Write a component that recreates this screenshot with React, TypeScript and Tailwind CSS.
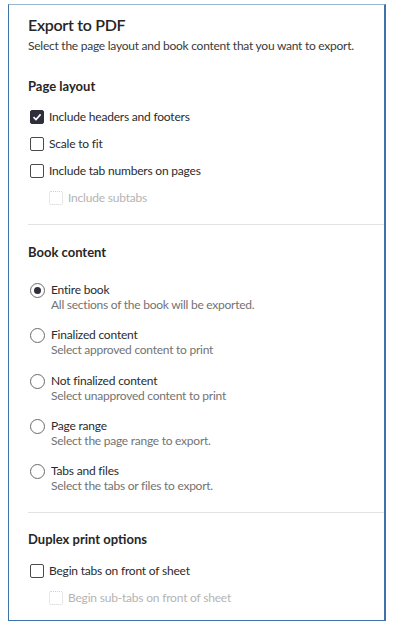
import React from "react";

const font = { fontFamily: 'Lato, "Noto Sans", sans-serif' };

function Check({ checked, disabled, label, indent }: { checked?: boolean; disabled?: boolean; label: string; indent?: boolean }) {
  return (
    <div className={`flex items-center h-[27px] ${indent ? "pl-[21px]" : "pl-[2px]"}`}>
      <div
        className={`w-[14px] h-[14px] rounded-[2px] flex items-center justify-center ${
          checked ? "bg-[#2f2f3b] border border-[#2f2f3b]" : disabled ? "border border-dotted border-[#cfcfcf]" : "border border-[#4a4a4a]"
        }`}
      >
        {checked && (
          <svg width="10" height="10" viewBox="0 0 10 10">
            <path d="M1.5 5.2 L4 7.6 L8.6 2.4" stroke="white" strokeWidth="1.6" fill="none" />
          </svg>
        )}
      </div>
      <span className={`ml-[5px] text-[12px] tracking-[-0.2px] ${disabled ? "text-[#b4b4b4]" : "text-[#2b2b2b]"}`}>{label}</span>
    </div>
  );
}

function Radio({ checked, title, desc }: { checked?: boolean; title: string; desc: string }) {
  return (
    <div className="flex pl-[2px] h-[45.25px]">
      <div className="w-[15px] h-[15px] rounded-full border border-[#6a6a6a] flex items-center justify-center mt-[1px]">
        {checked && <div className="w-[7px] h-[7px] rounded-full bg-[#2f2f3b]" />}
      </div>
      <div className="ml-[6px] flex flex-col leading-[15px]">
        <span className="text-[12px] tracking-[-0.2px] text-[#2b2b2b]">{title}</span>
        <span className="text-[12px] tracking-[-0.25px] text-[#737373]">{desc}</span>
      </div>
    </div>
  );
}

export default function App() {
  return (
    <div className="w-[394px] h-[625px] bg-white pt-[4px] pl-[8px]" style={font}>
      <div className="w-[378px] h-[617px] border border-[#3f72a6] border-r-2 border-t-[#9ab6d2] bg-white pt-[9px] pl-[19px]">
        <div className="text-[16px] tracking-[-0.3px] font-semibold text-[#262626] leading-[22px]">Export to PDF</div>
        <div className="text-[12px] tracking-[-0.25px] text-[#3a3a3a] leading-[16px] mt-[2px]">Select the page layout and book content that you want to export.</div>

        <div className="text-[13px] font-bold text-[#262626] mt-[23px] leading-[18px]">Page layout</div>
        <div className="mt-[8px] flex flex-col">
          <Check checked label="Include headers and footers" />
          <Check label="Scale to fit" />
          <Check label="Include tab numbers on pages" />
          <Check indent disabled label="Include subtabs" />
        </div>
        <div className="h-px bg-[#e3e3e3] mt-[13px]" />

        <div className="text-[13px] font-bold text-[#262626] mt-[18px] leading-[18px]">Book content</div>
        <div className="mt-[21px] flex flex-col">
          <Radio checked title="Entire book" desc="All sections of the book will be exported." />
          <Radio title="Finalized content" desc="Select approved content to print" />
          <Radio title="Not finalized content" desc="Select unapproved content to print" />
          <Radio title="Page range" desc="Select the page range to export." />
          <Radio title="Tabs and files" desc="Select the tabs or files to export." />
        </div>
        <div className="h-px bg-[#e3e3e3] mt-[4px]" />

        <div className="text-[13px] font-bold text-[#262626] mt-[17px] leading-[18px]">Duplex print options</div>
        <div className="mt-[9px] flex flex-col">
          <Check label="Begin tabs on front of sheet" />
          <Check indent disabled label="Begin sub-tabs on front of sheet" />
        </div>
      </div>
    </div>
  );
}
